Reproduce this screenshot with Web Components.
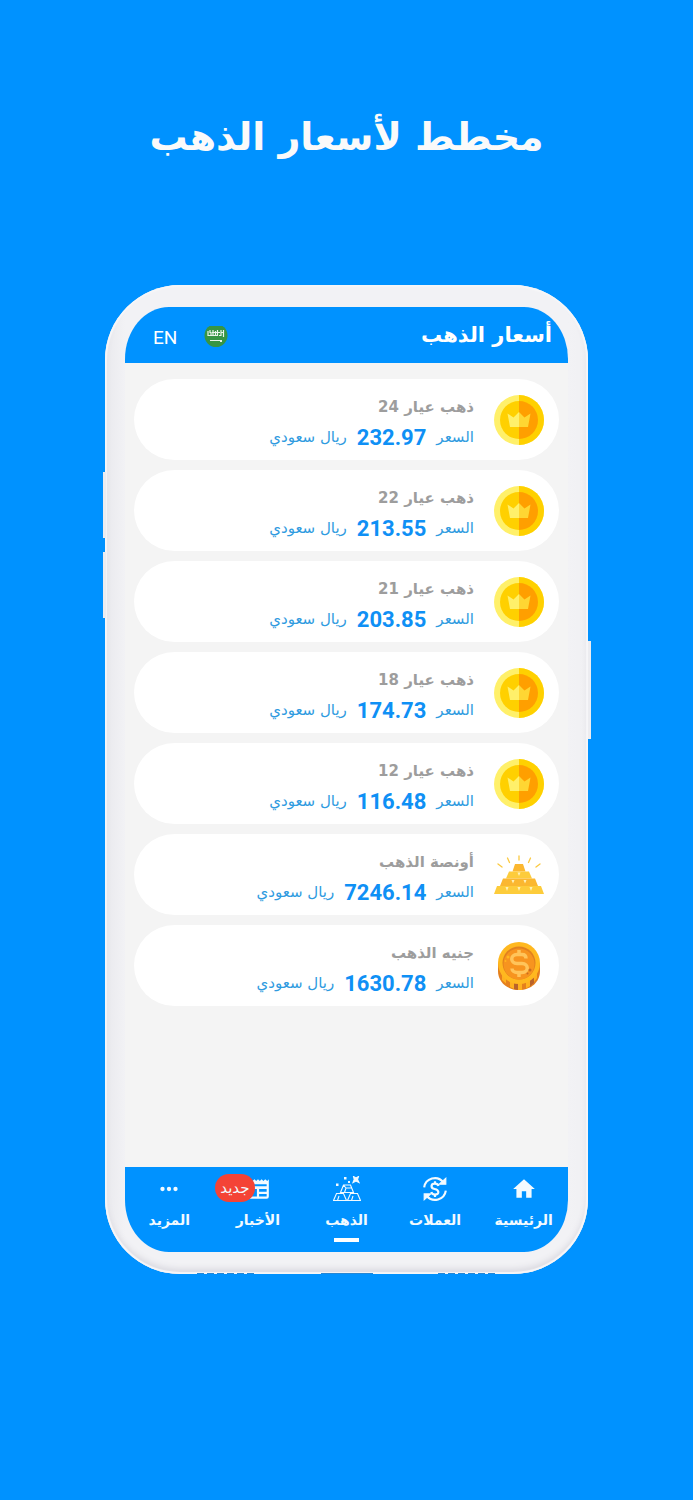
<!DOCTYPE html>
<html lang="ar" dir="rtl">
<head>
<meta charset="utf-8">
<meta name="viewport" content="width=device-width, initial-scale=1">
<title>أسعار الذهب</title>
<style>
    body {
        margin: 0;
        min-height: 100vh;
        background: #0092ff;
        font-family: "DejaVu Sans", sans-serif;
    }
</style>
</head>
<body>
<promo-page>
    <span slot="title">مخطط لأسعار الذهب</span>
    <phone-frame>
        <app-header slot="header">أسعار الذهب</app-header>
        <gold-card icon="coin" price="232.97">ذهب عيار 24</gold-card>
        <gold-card icon="coin" price="213.55">ذهب عيار 22</gold-card>
        <gold-card icon="coin" price="203.85">ذهب عيار 21</gold-card>
        <gold-card icon="coin" price="174.73">ذهب عيار 18</gold-card>
        <gold-card icon="coin" price="116.48">ذهب عيار 12</gold-card>
        <gold-card icon="bars" price="7246.14">أونصة الذهب</gold-card>
        <gold-card icon="dollar" price="1630.78">جنيه الذهب</gold-card>
        <app-nav slot="nav">
            <nav-item icon="home">الرئيسية</nav-item>
            <nav-item icon="currency">العملات</nav-item>
            <nav-item icon="gold" active>الذهب</nav-item>
            <nav-item icon="news" badge="جديد">الأخبار</nav-item>
            <nav-item icon="more">المزيد</nav-item>
        </app-nav>
    </phone-frame>
</promo-page>

<script>
(function () {
    'use strict';

    const cardIcons = {
        coin: `
            <svg viewBox="0 0 50 50" aria-hidden="true">
                <circle cx="25" cy="25" r="25" fill="#fff06a"/>
                <path d="M25 0a25 25 0 0 1 0 50z" fill="#ffd000"/>
                <circle cx="25" cy="25" r="19" fill="#ffd000"/>
                <path d="M25 6a19 19 0 0 1 0 38z" fill="#ff9f00"/>
                <path d="M16 32L13.500 18.500L19.500 22.500L25 17V32z" fill="#fff06a"/>
                <path d="M34 32L36.500 18.500L30.500 22.500L25 17V32z" fill="#ffd633"/>
            </svg>`,
        bars: `
            <svg viewBox="0 0 50 50" aria-hidden="true">
                <g stroke="#fbc940" stroke-width="1.300" stroke-linecap="round">
                    <path d="M25 6v4M13.500 8l2 4.500M36.500 8l-2 4.500M4 14l4 3M46 14l-4 3"/>
                </g>
                <path d="M21 14h8l2.500 7.500h-13z" fill="#fbb730"/>
                <path d="M15 21.500h20l3 7H12z" fill="#fdcc3b"/>
                <path d="M9 28.500h32l3 7.500H6z" fill="#fbb730"/>
                <path d="M3 36h44l3 8H0z" fill="#fdcc3b"/>
                <path d="M23.500 22.500h3L25 26zM17.500 30h3L19 33.500zM29.500 30h3L31 33.500zM11.500 37h3L13 41zM23.500 37h3L25 41zM35.500 37h3L37 41z" fill="#fff1b8"/>
            </svg>`,
        dollar: `
            <svg viewBox="0 0 50 50" aria-hidden="true">
                <path d="M4 22v8c0 11 9 19 21 19s21-8 21-19v-8z" fill="#e5801d"/>
                <path d="M8 39v-8h4v11.500zM16 46v-9h4v11zM24 49V39h4v10zM32 47.500V37h4v8zM40 41V31h3v6z" fill="#ffb11f"/>
                <path d="M20 48V38h4v11zM36 45.500V36h4v6z" fill="#ba6329"/>
                <circle cx="25" cy="22" r="21" fill="#ffb81f"/>
                <circle cx="25" cy="22" r="16.500" fill="#e1801f"/>
                <circle cx="25" cy="23" r="15.500" fill="#f7941f"/>
                <path d="M32 17.500c0-2.500-1.500-4-4-4h-5c-7 0-7 9 0 9h5c7 0 7 9 0 9h-5c-2.500 0-5-1.500-5-4M25 9v4.500M25 31.500V36" fill="none" stroke="#ffc45a" stroke-width="3.500"/>
                <g fill="#ffb61f"><circle cx="14" cy="16" r="1.500"/><circle cx="11.500" cy="20" r="1"/></g>
                <g fill="#c96b20"><circle cx="36" cy="29" r="1.500"/><circle cx="33.500" cy="32.500" r="1"/></g>
            </svg>`
    };

    const navIcons = {
        home: '<svg viewBox="0 0 24 24" aria-hidden="true"><path d="M10 20v-6h4v6h5v-8h3L12 3 2 12h3v8z" fill="currentColor"/></svg>',
        currency: `
            <svg viewBox="0 0 24 24" aria-hidden="true" fill="none" stroke="currentColor" stroke-width="2">
                <path d="M2 10.500A10 10 0 0 1 19.500 5.500M22 13.500A10 10 0 0 1 4.500 18.500"/>
                <path d="M15.800 7.500h6.200V2zM8.200 16.500H2V22z" fill="currentColor" stroke-width="1"/>
                <path d="M15.200 9.300c-.3-1.400-1.500-2.200-3.200-2.200-4.200 0-4.200 4.100-.4 4.900 4.600.9 4.600 5.100.4 5.100-1.900 0-3.100-.9-3.400-2.400M12 4.800v2.300M12 17.100v2.200"/>
            </svg>`,
        gold: `
            <svg viewBox="0 0 28 26" aria-hidden="true" fill="none" stroke="currentColor" stroke-width="1.100">
                <path d="M10.500 9h7l3 7.500h-13zM10.500 9l2.500 3h5.500M13 12l-1.500 4.500"/>
                <path d="M3.500 17.500h7l3 7H.5zM6 20l-1.500 4.500M17.500 17.500h7l3 7h-13zM20 20l-1.500 4.500"/>
                <path d="M20.500.500L23 2l2.500-1.500L24.500 3.500l1.500 3L23 5l-3 1.500 1.200-3z" fill="currentColor"/>
                <path d="M11 1h2.500v2.500H11zM3 7.500h2.500V10H3zM15 5h2v2h-2z" fill="currentColor" stroke="none"/>
            </svg>`,
        news: `
            <svg viewBox="0 0 24 24" aria-hidden="true">
                <path d="M2 3l1.500 1.500L5.300 3 7 4.500 8.700 3l1.600 1.500L12 3l1.700 1.500L15.300 3 17 4.500 18.700 3l1.800 1.500L22 3v16a2 2 0 0 1-2 2H4a2 2 0 0 1-2-2zM4 12v7h7v-7zM13 12v2.500h7V12zM13 16.500V19h7v-2.500zM4 7.500v2h16v-2z" fill="currentColor" fill-rule="evenodd"/>
            </svg>`,
        more: '<svg viewBox="0 0 24 24" aria-hidden="true" fill="currentColor"><circle cx="6" cy="12" r="2"/><circle cx="12" cy="12" r="2"/><circle cx="18" cy="12" r="2"/></svg>'
    };

    class PromoPage extends HTMLElement {
        constructor() {
            super();
            this.attachShadow({ mode: 'open' });
            this.shadowRoot.innerHTML = `
                <style>
                    :host {
                        display: block;
                        padding: 105px 105px 40px;
                    }

                    h1 {
                        margin: 0 0 116px;
                        color: #fafafa;
                        font-size: 38px;
                        line-height: 64px;
                        font-weight: 700;
                        text-align: center;
                    }
                </style>
                <h1><slot name="title"></slot></h1>
                <slot></slot>
            `;
        }
    }

    class PhoneFrame extends HTMLElement {
        constructor() {
            super();
            this.attachShadow({ mode: 'open' });
            this.shadowRoot.innerHTML = `
                <style>
                    :host {
                        display: block;
                        position: relative;
                    }

                    .body {
                        padding: 22px 20px;
                        border-radius: 75px;
                        background: linear-gradient(90deg, #e9e9ed, #f2f2f5 20px, #f2f2f5 calc(100% - 20px), #f0f0f3);
                        box-shadow: inset 0 0 1px 2px #f6f6f8, inset 0 -5px 6px #d9d8df;
                    }

                    .screen {
                        display: flex;
                        flex-direction: column;
                        min-height: 945px;
                        overflow: hidden;
                        border-radius: 44px / 52px;
                        background: #f4f4f4;
                    }

                    .list {
                        flex: 1;
                        display: flex;
                        flex-direction: column;
                        gap: 10px;
                        padding: 16px 9px;
                    }

                    .key {
                        position: absolute;
                        width: 3px;
                        background: #ececf0;
                    }

                    .up, .down {
                        left: -2px;
                        height: 66px;
                    }

                    .up { top: 187px; }
                    .down { top: 267px; }

                    .power {
                        right: -3px;
                        top: 356px;
                        height: 98px;
                    }

                    .port {
                        position: absolute;
                        bottom: 0;
                        height: 1px;
                        width: 58px;
                        background: repeating-linear-gradient(90deg, #2686d4 0 7px, transparent 7px 10px);
                    }

                    .port.a { left: 19%; }
                    .port.b { right: 19%; }

                    .port.usb {
                        left: 0;
                        right: 0;
                        margin: auto;
                        width: 52px;
                        background: #2686d4;
                    }
                </style>
                <div class="key up"></div>
                <div class="key down"></div>
                <div class="key power"></div>
                <div class="body">
                    <div class="screen">
                        <slot name="header"></slot>
                        <main class="list"><slot></slot></main>
                        <slot name="nav"></slot>
                    </div>
                </div>
                <div class="port a"></div>
                <div class="port usb"></div>
                <div class="port b"></div>
            `;
        }
    }

    class AppHeader extends HTMLElement {
        constructor() {
            super();
            this.attachShadow({ mode: 'open' });
            this.shadowRoot.innerHTML = `
                <style>
                    :host {
                        display: block;
                        background: #0092ff;
                        color: #fff;
                    }

                    header {
                        display: flex;
                        align-items: center;
                        justify-content: space-between;
                        height: 56px;
                        padding: 0 16px 0 28px;
                    }

                    h2 {
                        margin: 0;
                        font-size: 21px;
                        line-height: 32px;
                        font-weight: 700;
                    }

                    .tools {
                        display: flex;
                        align-items: center;
                        gap: 27px;
                        padding-top: 6px;
                    }

                    button {
                        display: flex;
                        padding: 0;
                        border: 0;
                        background: none;
                        color: inherit;
                        font: 19px/24px Roboto, sans-serif;
                        cursor: pointer;
                    }

                    svg {
                        width: 24px;
                        height: 24px;
                    }
                </style>
                <header>
                    <h2><slot></slot></h2>
                    <div class="tools">
                        <button type="button" aria-label="السعودية">
                            <svg viewBox="0 0 24 24" aria-hidden="true">
                                <circle cx="12" cy="9" r="11.500" fill="#379544" transform="translate(0 .5)"/>
                                <path d="M4 5v4.500h3V6M6 4v3M9 4v5.500h2.500V5M11.500 9.500h2V4M15 9.500h2V4M17 6.500h2.500V11M19.500 4v2M4 9.500h10M8 6.500h8" fill="none" stroke="#e9f4ea" stroke-width="1.200"/>
                                <path d="M6 14.500h12M16 15.500h2" stroke="#e9f4ea" stroke-width="1"/>
                            </svg>
                        </button>
                        <button type="button">EN</button>
                    </div>
                </header>
            `;
        }
    }

    class GoldCard extends HTMLElement {
        constructor() {
            super();
            this.attachShadow({ mode: 'open' });
        }

        connectedCallback() {
            this.render();
        }

        render() {
            this.shadowRoot.innerHTML = `
                <style>
                    :host {
                        display: block;
                    }

                    article {
                        display: flex;
                        align-items: center;
                        gap: 20px;
                        padding: 7px 15px;
                        border-radius: 41px;
                        background: #fff;
                    }

                    svg {
                        display: block;
                        width: 50px;
                        height: 50px;
                    }

                    .text {
                        padding-top: 6px;
                    }

                    h3 {
                        margin: 0;
                        color: #9d9d9d;
                        font-size: 15px;
                        line-height: 30px;
                        font-weight: 700;
                    }

                    p {
                        display: flex;
                        align-items: center;
                        gap: 10px;
                        margin: 0;
                        color: #2f9be0;
                        font-size: 15px;
                        line-height: 31px;
                    }

                    strong {
                        color: #0f90f5;
                        font: 700 22px/31px Roboto, sans-serif;
                    }
                </style>
                <article>
                    ${cardIcons[this.getAttribute('icon')]}
                    <div class="text">
                        <h3><slot></slot></h3>
                        <p>
                            <span>السعر</span>
                            <strong>${this.getAttribute('price')}</strong>
                            <span>ريال سعودي</span>
                        </p>
                    </div>
                </article>
            `;
        }
    }

    class AppNav extends HTMLElement {
        constructor() {
            super();
            this.attachShadow({ mode: 'open' });
            this.shadowRoot.innerHTML = `
                <style>
                    :host {
                        display: block;
                        background: #0092ff;
                        color: #f2faff;
                    }

                    nav {
                        display: grid;
                        grid-template-columns: repeat(5, 1fr);
                        height: 85px;
                    }
                </style>
                <nav><slot></slot></nav>
            `;
        }
    }

    class NavItem extends HTMLElement {
        constructor() {
            super();
            this.attachShadow({ mode: 'open' });
        }

        connectedCallback() {
            this.render();
        }

        render() {
            const badge = this.getAttribute('badge');

            this.shadowRoot.innerHTML = `
                <style>
                    :host {
                        display: block;
                        min-width: 0;
                    }

                    a {
                        display: flex;
                        flex-direction: column;
                        align-items: center;
                        padding-top: 9px;
                        color: inherit;
                        text-decoration: none;
                    }

                    .icon {
                        position: relative;
                        display: flex;
                    }

                    svg {
                        width: 28px;
                        height: 26px;
                    }

                    .label {
                        margin-top: 6px;
                        font-size: 14px;
                        line-height: 24px;
                        font-weight: 700;
                        white-space: nowrap;
                    }

                    .badge {
                        position: absolute;
                        right: 17px;
                        top: -2px;
                        box-sizing: border-box;
                        width: 40px;
                        border-radius: 14px;
                        background: #f44336;
                        font-size: 15px;
                        line-height: 28px;
                        text-align: center;
                    }

                    :host([active]) a::after {
                        content: "";
                        width: 25px;
                        height: 4px;
                        margin-top: 6px;
                        background: #fff;
                    }
                </style>
                <a href="#${this.getAttribute('icon')}">
                    <span class="icon">
                        ${navIcons[this.getAttribute('icon')]}
                        ${badge ? `<span class="badge">${badge}</span>` : ''}
                    </span>
                    <span class="label"><slot></slot></span>
                </a>
            `;
        }
    }

    customElements.define('promo-page', PromoPage);
    customElements.define('phone-frame', PhoneFrame);
    customElements.define('app-header', AppHeader);
    customElements.define('gold-card', GoldCard);
    customElements.define('app-nav', AppNav);
    customElements.define('nav-item', NavItem);
})();
</script>
</body>
</html>
